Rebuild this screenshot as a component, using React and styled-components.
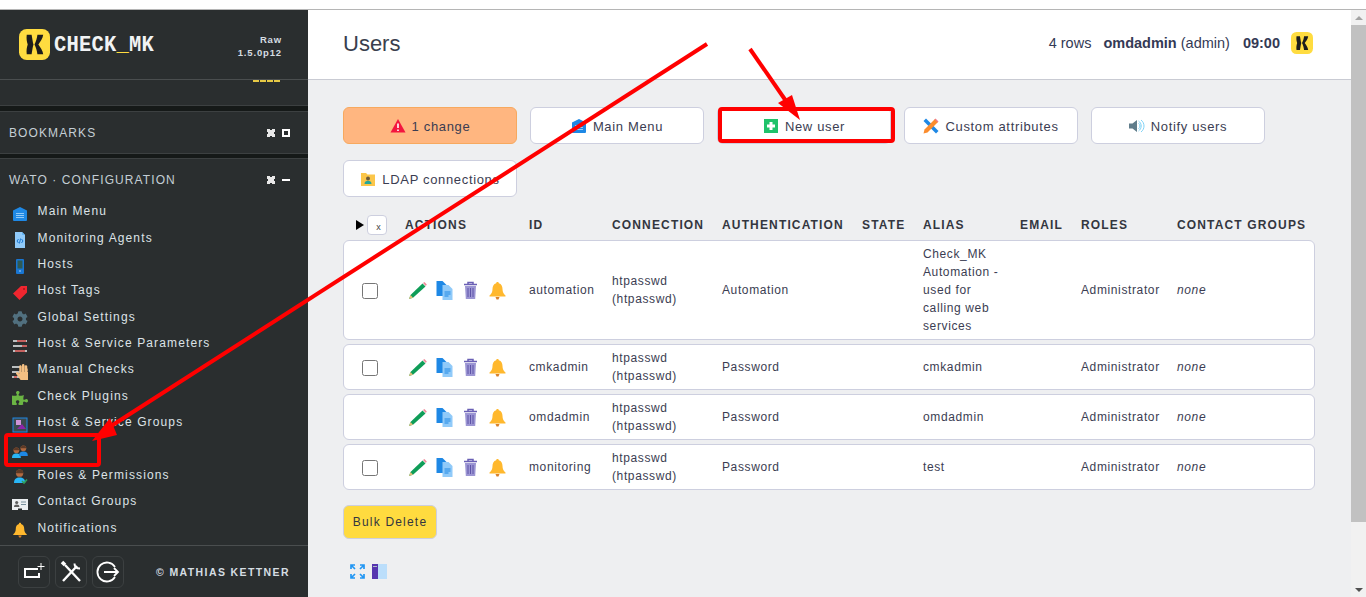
import React from "react";
import styled, { createGlobalStyle } from "styled-components";
import { FaCog, FaPuzzlePiece, FaHandPaper } from "react-icons/fa";

const GlobalStyle = createGlobalStyle`
  html, body {
    margin: 0;
    height: 597px;
    overflow: hidden;
    background: #fff;
    font-family: "Liberation Sans", Arial, sans-serif;
  }
`;

const Page = styled.div`
  position: relative;
  width: 1366px;
  height: 597px;
  padding-top: 9px;
  box-sizing: border-box;
  overflow: hidden;
`;

const Frame = styled.div`
  display: flex;
  height: 588px;
  border-top: 1px solid #b5b5b5;
`;

/* sidebar */
const Sidebar = styled.aside`
  width: 308px;
  flex: none;
  display: flex;
  flex-direction: column;
  background: #2a2e2f;
  color: #dfe5e9;
`;

const Brand = styled.div`
  height: 70px;
  flex: none;
  box-sizing: border-box;
  display: flex;
  align-items: center;
  padding: 0 26px 0 19px;
  border-bottom: 1px solid #4a4e4f;
`;

const LogoBox = styled.span`
  width: 31px;
  height: 31px;
  flex: none;
  svg {
    display: block;
    width: 100%;
    height: 100%;
  }
`;

const LogoText = styled.span`
  margin-left: 4px;
  font-family: "Liberation Mono", monospace;
  font-weight: 700;
  font-size: 20.5px;
  letter-spacing: 0.2px;
  color: #f1f3f4;
  transform: scaleY(1.1);
  span {
    color: #ffdc40;
  }
`;

const Version = styled.div`
  margin-left: auto;
  padding-top: 3px;
  text-align: right;
  font-size: 9.5px;
  font-weight: 700;
  line-height: 13px;
  letter-spacing: 0.85px;
  color: #d5dde2;
`;

const ClippedSnapin = styled.div`
  height: 26px;
  flex: none;
  box-sizing: border-box;
  border-bottom: 1px solid #3c4041;
  display: flex;
  justify-content: flex-end;
  padding-right: 28px;
  &::before {
    content: "";
    width: 27px;
    height: 2px;
    background: repeating-linear-gradient(90deg, #e6c945 0 6px, transparent 6px 7px);
  }
`;

const Gap = styled.div`
  height: ${(p) => p.$height}px;
  flex: none;
  background: #151918;
`;

const SnapinHead = styled.div`
  height: ${(p) => p.$height}px;
  flex: none;
  box-sizing: border-box;
  display: flex;
  align-items: center;
  justify-content: space-between;
  padding: ${(p) => (p.$bordered ? 0 : 2)}px 18px 0 9px;
  font-size: 12px;
  letter-spacing: 1.1px;
  color: #c4ced5;
  border-top: 1px solid #3c4041;
  border-bottom: ${(p) => (p.$bordered ? "1px solid #3c4041" : "none")};
`;

const HeadControls = styled.div`
  display: flex;
  align-items: center;
  gap: 7px;
`;

const CloseMark = styled.span`
  width: 8px;
  height: 8px;
  background:
    linear-gradient(45deg, transparent 34%, #e8e8e8 34% 66%, transparent 66%),
    linear-gradient(-45deg, transparent 34%, #e8e8e8 34% 66%, transparent 66%);
`;

const BoxMark = styled.span`
  width: 8px;
  height: 8px;
  box-sizing: border-box;
  border: 2px solid #fff;
`;

const DashMark = styled.span`
  width: 8px;
  height: 2px;
  background: #fff;
`;

const Menu = styled.nav`
  display: flex;
  flex-direction: column;
  padding-top: 0.45px;
`;

const MenuItem = styled.a`
  height: 26.39px;
  display: flex;
  align-items: center;
  padding: 0 0 3px 12px;
  box-sizing: border-box;
  font-size: 12px;
  letter-spacing: 1.13px;
  color: #dde3e7;
  svg {
    flex: none;
    width: 16px;
    height: 16px;
    margin: 5px 9.5px 0 0;
  }
`;

const SideFooter = styled.div`
  margin-top: auto;
  height: 53px;
  flex: none;
  box-sizing: border-box;
  border-top: 1px solid #4a4e4f;
  display: flex;
  align-items: center;
  padding: 0 18px;
`;

const FootButton = styled.div`
  width: 32px;
  height: 32px;
  margin-right: 5px;
  box-sizing: border-box;
  border: 1px solid #3c4041;
  border-radius: 6px;
  display: flex;
  align-items: center;
  justify-content: center;
  svg {
    width: 24px;
    height: 24px;
  }
`;

const Copyright = styled.div`
  margin-left: auto;
  font-size: 10.5px;
  font-weight: 700;
  letter-spacing: 1.4px;
  color: #d5dde2;
`;

/* main */
const Main = styled.main`
  flex: 1;
  min-width: 0;
  display: flex;
  flex-direction: column;
  background: #eeeff1;
`;

const TopBar = styled.header`
  height: 70px;
  flex: none;
  box-sizing: border-box;
  display: flex;
  align-items: center;
  padding: 0 38px 3px 35px;
  background: #fff;
  border-bottom: 1px solid #c9cbd3;
  color: #343a55;
`;

const Title = styled.h1`
  margin: 2px 0 0;
  font-size: 22px;
  font-weight: 400;
  color: #3a3f4e;
`;

const Status = styled.div`
  margin-left: auto;
  display: flex;
  align-items: center;
  font-size: 14.5px;
  svg {
    width: 22px;
    height: 22px;
    margin-left: 11px;
  }
`;

const User = styled.span`
  margin: 0 13px 0 12px;
  b {
    font-weight: 700;
  }
`;

const Content = styled.div`
  padding: 27px 36px 0 35px;
  display: flex;
  flex-direction: column;
`;

const Actions = styled.div`
  display: grid;
  grid-template-columns: repeat(5, 174px);
  column-gap: 13px;
  row-gap: 16px;
`;

const ActionButton = styled.button`
  height: 37px;
  padding: 1px 0 0;
  display: flex;
  align-items: center;
  justify-content: center;
  gap: 6px;
  box-sizing: border-box;
  border: 1px solid ${(p) => (p.$warn ? "#f7a95f" : "#cdcfdf")};
  border-radius: 6px;
  background: ${(p) => (p.$warn ? "#ffb680" : "#fff")};
  font-family: inherit;
  font-size: 13px;
  letter-spacing: 0.66px;
  color: #3b3d52;
  svg {
    width: 16px;
    height: 16px;
    flex: none;
  }
`;

const HeadRow = styled.div`
  display: grid;
  grid-template-columns: 62px 124px 83px 110px 140px 61px 97px 61px 96px 1fr;
  align-items: center;
  height: 28px;
  margin-top: 15px;
  padding-bottom: 2px;
  box-sizing: border-box;
  font-size: 12px;
  font-weight: 700;
  letter-spacing: 1.15px;
  color: #33363f;
`;

const Toggle = styled.div`
  display: flex;
  align-items: center;
  gap: 3px;
  padding-left: 13px;
  &::before {
    content: "";
    border-left: 8px solid #000;
    border-top: 5px solid transparent;
    border-bottom: 5px solid transparent;
  }
`;

const ToggleBox = styled.span`
  width: 20px;
  height: 20px;
  box-sizing: border-box;
  border: 1px solid #cdcfdf;
  border-radius: 4px;
  background: #fff;
  display: flex;
  align-items: flex-end;
  justify-content: center;
  padding-left: 4px;
  font-size: 9px;
  font-weight: 400;
  line-height: 14px;
  color: #444;
`;

const Rows = styled.div`
  display: flex;
  flex-direction: column;
  gap: 4px;
`;

const Row = styled.div`
  display: grid;
  grid-template-columns: 61px 124px 83px 110px 140px 61px 97px 61px 96px 1fr;
  align-items: center;
  padding: 4px 0;
  box-sizing: border-box;
  background: #fff;
  border: 1px solid #cdcfdf;
  border-radius: 6px;
  font-size: 12px;
  line-height: 18px;
  letter-spacing: 0.62px;
  color: #3b3d52;
`;

const AliasCell = styled.div`
  padding-right: 16px;
`;

const Check = styled.input.attrs({ type: "checkbox" })`
  appearance: none;
  display: block;
  width: 16px;
  height: 16px;
  margin: 2px 0 0 18px;
  border: 1.5px solid #767676;
  border-radius: 2.5px;
  background: #fff;
`;

const RowIcons = styled.div`
  display: flex;
  align-items: center;
  gap: 7.5px;
  padding-left: 3px;
  svg {
    width: 19px;
    height: 19px;
    flex: none;
  }
`;

const Italic = styled.span`
  font-style: italic;
`;

const BulkDelete = styled.button`
  align-self: flex-start;
  width: 94px;
  height: 34px;
  margin-top: 15px;
  padding: 0;
  box-sizing: border-box;
  border: 1px solid #cdcfdf;
  border-radius: 6px;
  background: #ffdb3f;
  font-family: inherit;
  font-size: 12px;
  letter-spacing: 1.2px;
  color: #33363f;
`;

const ViewIcons = styled.div`
  display: flex;
  gap: 7px;
  margin-top: 25px;
  padding-left: 7px;
  svg {
    width: 15px;
    height: 15px;
  }
`;

/* browser scrollbar */
const Scrollbar = styled.div`
  width: 15px;
  flex: none;
  display: flex;
  flex-direction: column;
  align-items: center;
  background: #f1f1f1;
`;

const ScrollTrack = styled.div`
  flex: 1;
  width: 100%;
  padding: 15px 0 76px;
  box-sizing: border-box;
  display: flex;
`;

const ScrollThumb = styled.div`
  flex: 1;
  background: #c1c1c1;
`;

const ScrollArrow = styled.span`
  position: absolute;
  right: 3px;
  ${(p) => (p.$down ? "bottom: 5px;" : "top: 16px;")}
  border-left: 4px solid transparent;
  border-right: 4px solid transparent;
  ${(p) => (p.$down ? "border-top: 4px solid #505050;" : "border-bottom: 4px solid #a3a3a3;")}
`;

/* red annotations painted on top of the screenshot */
const Annotations = styled.svg`
  position: absolute;
  inset: 0;
  pointer-events: none;
`;

const KMark = () => (
  <svg viewBox="0 0 32 32">
    <rect width="32" height="32" rx="8" fill="#ffdc40" />
    <path d="M8 6h5c1 5 1 7 2 10-1 3-1 5-2 10H8c-.5-4 0-7 1-10-1-3-1.5-6-1-10z" fill="#1c1c1c" />
    <path d="M25 6h-6c-.5 4-1.5 7-3 10 1.5 3 2.5 6 3 10h6c-.5-4-3-7-5-10 2-3 4.5-6 5-10z" fill="#1c1c1c" />
  </svg>
);

const Svg = ({ children }) => <svg viewBox="0 0 16 16">{children}</svg>;

const HomeIcon = () => (
  <Svg>
    <path d="M8 1l7 3.5V14a1 1 0 0 1-1 1H2a1 1 0 0 1-1-1V4.500z" fill="#1e88e5" />
    <path d="M4 7.500h8M4 9.500h8M4 11.500h8" stroke="#90caf9" strokeWidth="1" />
  </Svg>
);
const AgentIcon = () => (
  <Svg>
    <path d="M3 0h7l3 3v13H3z" fill="#90caf9" />
    <path d="M10 0l3 3h-3z" fill="#64b5f6" />
    <path d="M6.500 7L5 9l1.500 2M9.500 7L11 9l-1.500 2M8.600 6.500l-1.200 5" stroke="#1976d2" fill="none" />
  </Svg>
);
const HostIcon = () => (
  <Svg>
    <rect x="4" y="1" width="8" height="15" rx="1" fill="#1976d2" />
    <rect x="5.500" y="2.500" width="5" height="8" fill="#2e5a55" />
    <circle cx="8" cy="13" r=".8" fill="#bbdefb" />
  </Svg>
);
const TagIcon = () => (
  <Svg>
    <path d="M9 1h6v6.500L7.500 15 1 8.500z" fill="#f0262f" />
    <circle cx="12" cy="4" r="1" fill="#a8141b" />
  </Svg>
);
const SlidersIcon = () => (
  <Svg>
    <path d="M1 3h14M1 8h14M1 13h14" stroke="#eceff1" strokeWidth="1.400" />
    <path d="M5 3h9M10 8h5M3 13h10" stroke="#c7433f" strokeWidth="1.400" />
  </Svg>
);
const HandIcon = () => (
  <svg viewBox="0 0 16 16">
    <path d="M0 3h8M0 8h8M0 13h8" stroke="#eceff1" strokeWidth="1.400" />
    <path d="M2 13h3" stroke="#d8413c" strokeWidth="1.400" />
    <FaHandPaper x="3" y="0" width="13" height="16" color="#f5c083" />
  </svg>
);
const GroupIcon = () => (
  <Svg>
    <rect x="1" y="1" width="14" height="14" fill="#3d4a4f" stroke="#1e88e5" strokeWidth="1" />
    <rect x="4" y="3" width="5" height="5" fill="#ce93d8" />
    <path d="M5 12l5-5 4 5z" fill="#8e24aa" />
  </Svg>
);
const Person = ({ x, y, s, body }) => (
  <g transform={`translate(${x} ${y}) scale(${s})`}>
    <path d="M0 10c0-3 1.600-4 4-4s4 1 4 4z" fill={body} />
    <circle cx="4" cy="3" r="2.600" fill="#b06a42" />
    <path d="M1.400 3a2.600 2.600 0 0 1 5.200 0z" fill="#5d3a26" />
  </g>
);
const UsersIcon = () => (
  <Svg>
    <Person x={0} y={4} s={1.1} body="#29b6f6" />
    <Person x={7} y={2} s={1.1} body="#1e88e5" />
  </Svg>
);
const RolesIcon = () => (
  <Svg>
    <Person x={2} y={0} s={1.400} body="#29b6f6" />
    <path d="M10 12l2 2 3-3.500" stroke="#2e9e5b" strokeWidth="1.600" fill="none" />
  </Svg>
);
const ContactIcon = () => (
  <Svg>
    <path d="M0 3h16v11h-6v-1.500H6V14H0z" fill="#eceff1" />
    <circle cx="4.700" cy="6.500" r="1.600" fill="#5d5d5d" />
    <path d="M2 11c0-2 1-2.600 2.700-2.600S7.400 9 7.400 11z" fill="#5d5d5d" />
    <path d="M9 6h5M9 8.500h5" stroke="#78909c" />
  </Svg>
);
const PlusTile = () => (
  <Svg>
    <rect x="1" y="1" width="14" height="14" fill="#1fc26a" />
    <path d="M8 4v8M4 8h8" stroke="#fff" strokeWidth="3" />
  </Svg>
);
const WarnIcon = () => (
  <Svg>
    <path d="M8 1l7.500 13.500H.5z" fill="#f3163f" />
    <path d="M8 5.500v4.500M8 11.400v1.500" stroke="#fff" strokeWidth="1.600" />
  </Svg>
);
const RulerIcon = () => (
  <Svg>
    <path d="M3 .5L15.500 13 13 15.500.5 3z" fill="#1e88e5" />
    <path d="M.5 15.500l1-4L12 1l3 3L4.500 14.500z" fill="#fb8c2d" />
    <path d="M12.500.5l3 3-1 1-3-3z" fill="#ef7a85" />
  </Svg>
);
const SpeakerIcon = () => (
  <Svg>
    <path d="M0 5.500h3.500L8 2v12l-4.500-3.500H0z" fill="#607d8b" />
    <path d="M9.500 3a6 6 0 0 1 0 10M9.500 5.200a3.400 3.400 0 0 1 0 5.600M12 2a7.500 7.500 0 0 1 0 12" stroke="#7fd3f7" fill="none" />
  </Svg>
);
const FolderIcon = () => (
  <Svg>
    <path d="M1 2h5l1.500 1.500H15V15H1z" fill="#fbc64a" />
    <circle cx="8" cy="7.500" r="2" fill="#6b5a3a" />
    <path d="M4.500 13c0-2.400 1.500-3.200 3.500-3.200s3.500.8 3.500 3.200z" fill="#26a69a" />
  </Svg>
);
const PencilIcon = () => (
  <svg viewBox="0 0 19 19">
    <path d="M1 18l1.500-4L14.500 2.500l3 3L5 16.800z" fill="#0f9d58" />
    <path d="M1 18l1.500-4L5 16.800z" fill="#e5c07b" />
    <path d="M15 2l1.400-1 2.400 2.400-1 1.600z" fill="#ef8a9a" />
  </svg>
);
const CopyIcon = () => (
  <svg viewBox="0 0 18 19">
    <path d="M1 0h6l4 4v11H1z" fill="#1e88e5" />
    <path d="M7 4h6l4 4v11H7z" fill="#90caf9" />
    <path d="M9 11h6M9 13h6M9 15h4" stroke="#1e88e5" />
  </svg>
);
const TrashIcon = () => (
  <svg viewBox="0 0 18 19">
    <path d="M2.500 3.500h13M6.500 3V1.500h5V3" stroke="#6a5fb5" strokeWidth="1.500" fill="none" />
    <path d="M3.500 5h11l-.8 13H4.300z" fill="#9b95d3" />
    <path d="M6.500 7v9M9 7v9M11.500 7v9" stroke="#5e54a8" />
  </svg>
);
const BellIcon = () => (
  <svg viewBox="0 0 18 19">
    <path d="M9 1c1 0 1.300.7 1.300 1.300C13 3 14 5.600 14 8c0 3 1 5 3 6.500v1H1v-1C3 13 4 11 4 8c0-2.400 1-5 3.700-5.700C7.700 1.700 8 1 9 1z" fill="#ffb82e" />
    <path d="M7 16h4l-1 2.500H8z" fill="#d9822b" />
  </svg>
);
const ExpandIcon = () => (
  <svg viewBox="0 0 15 15" fill="none" stroke="#2196f3" strokeWidth="1.700">
    <path d="M1 5V1h4M10 1h4v4M14 10v4h-4M5 14H1v-4M1.500 1.500l3.500 3.500M13.500 1.500L10 5M13.500 13.500L10 10M1.500 13.500L5 10" />
  </svg>
);
const PanelIcon = () => (
  <svg viewBox="0 0 15 15">
    <rect width="15" height="15" fill="#bbdefb" />
    <rect width="6" height="15" fill="#5535b0" />
    <path d="M1 2.500h4" stroke="#b0bec5" />
  </svg>
);

const SnapinAddIcon = () => (
  <svg viewBox="0 0 24 24" fill="none" stroke="#fff" strokeWidth="2">
    <path d="M16 9H3v8h13M17 13v5" />
    <path d="M19 3v7M15.500 6.500h7" strokeWidth="1" />
  </svg>
);
const ToolsIcon = () => (
  <svg viewBox="0 0 24 24" fill="none" stroke="#fff">
    <path d="M4 21L18 6" strokeWidth="2.400" />
    <path d="M21 21L6 5" strokeWidth="2.400" />
    <path d="M15.500 3.500c0 3 2 5 5.500 5" strokeWidth="2" />
    <path d="M3 2l3 3" strokeWidth="3.500" />
  </svg>
);
const LogoutIcon = () => (
  <svg viewBox="0 0 24 24" fill="none" stroke="#fff" strokeWidth="1.800">
    <path d="M19 7A9.500 9.500 0 1 0 19 17" />
    <path d="M8 12h14M18 8l4 4-4 4" />
  </svg>
);

const menuItems = [
  ["Main Menu", <HomeIcon />],
  ["Monitoring Agents", <AgentIcon />],
  ["Hosts", <HostIcon />],
  ["Host Tags", <TagIcon />],
  ["Global Settings", <FaCog color="#51707f" />],
  ["Host & Service Parameters", <SlidersIcon />],
  ["Manual Checks", <HandIcon />],
  ["Check Plugins", <FaPuzzlePiece color="#6bb544" />],
  ["Host & Service Groups", <GroupIcon />],
  ["Users", <UsersIcon />],
  ["Roles & Permissions", <RolesIcon />],
  ["Contact Groups", <ContactIcon />],
  ["Notifications", <BellIcon />],
];

const buttons = [
  ["1 change", <WarnIcon />, true],
  ["Main Menu", <HomeIcon />],
  ["New user", <PlusTile />],
  ["Custom attributes", <RulerIcon />],
  ["Notify users", <SpeakerIcon />],
  ["LDAP connections", <FolderIcon />],
];

const headers = ["ACTIONS", "ID", "CONNECTION", "AUTHENTICATION", "STATE", "ALIAS", "EMAIL", "ROLES", "CONTACT GROUPS"];

const users = [
  { id: "automation", auth: "Automation", alias: "Check_MK Automation - used for calling web services", check: true },
  { id: "cmkadmin", auth: "Password", alias: "cmkadmin", check: true },
  { id: "omdadmin", auth: "Password", alias: "omdadmin", check: false },
  { id: "monitoring", auth: "Password", alias: "test", check: true },
];

export default function App() {
  return (
    <Page>
      <GlobalStyle />
      <Frame>
        <Sidebar>
          <Brand>
            <LogoBox>
              <KMark />
            </LogoBox>
            <LogoText>
              CHECK<span>_</span>MK
            </LogoText>
            <Version>
              Raw
              <br />
              1.5.0p12
            </Version>
          </Brand>
          <ClippedSnapin />
          <Gap $height={5} />
          <SnapinHead $height={43} $bordered>
            BOOKMARKS
            <HeadControls>
              <CloseMark />
              <BoxMark />
            </HeadControls>
          </SnapinHead>
          <Gap $height={4} />
          <SnapinHead $height={41}>
            WATO · CONFIGURATION
            <HeadControls>
              <CloseMark />
              <DashMark />
            </HeadControls>
          </SnapinHead>
          <Menu>
            {menuItems.map(([label, icon]) => (
              <MenuItem key={label}>
                {icon}
                {label}
              </MenuItem>
            ))}
          </Menu>
          <SideFooter>
            <FootButton>
              <SnapinAddIcon />
            </FootButton>
            <FootButton>
              <ToolsIcon />
            </FootButton>
            <FootButton>
              <LogoutIcon />
            </FootButton>
            <Copyright>© MATHIAS KETTNER</Copyright>
          </SideFooter>
        </Sidebar>
        <Main>
          <TopBar>
            <Title>Users</Title>
            <Status>
              4 rows
              <User>
                <b>omdadmin</b> (admin)
              </User>
              <b>09:00</b>
              <KMark />
            </Status>
          </TopBar>
          <Content>
            <Actions>
              {buttons.map(([label, icon, warn]) => (
                <ActionButton key={label} $warn={warn}>
                  {icon}
                  {label}
                </ActionButton>
              ))}
            </Actions>
            <HeadRow>
              <Toggle>
                <ToggleBox>x</ToggleBox>
              </Toggle>
              {headers.map((h) => (
                <div key={h}>{h}</div>
              ))}
            </HeadRow>
            <Rows>
              {users.map((u) => (
                <Row key={u.id}>
                  <div>{u.check && <Check />}</div>
                  <RowIcons>
                    <PencilIcon />
                    <CopyIcon />
                    <TrashIcon />
                    <BellIcon />
                  </RowIcons>
                  <div>{u.id}</div>
                  <div>
                    htpasswd
                    <br />
                    (htpasswd)
                  </div>
                  <div>{u.auth}</div>
                  <div />
                  <AliasCell>{u.alias}</AliasCell>
                  <div />
                  <div>Administrator</div>
                  <Italic>none</Italic>
                </Row>
              ))}
            </Rows>
            <BulkDelete>Bulk Delete</BulkDelete>
            <ViewIcons>
              <ExpandIcon />
              <PanelIcon />
            </ViewIcons>
          </Content>
        </Main>
        <Scrollbar>
          <ScrollArrow />
          <ScrollTrack>
            <ScrollThumb />
          </ScrollTrack>
          <ScrollArrow $down />
        </Scrollbar>
      </Frame>
      <Annotations width="1366" height="597" viewBox="0 0 1366 597">
        <g fill="none" stroke="#f00" strokeWidth="4">
          <rect x="6" y="435" width="93" height="30" rx="2" />
          <rect x="720" y="109" width="173" height="32" rx="2" />
          <path d="M707 44L108 428" />
          <path d="M750 49L786 101" />
        </g>
        <path d="M92 441L110 418 117 435z" fill="#f00" />
        <path d="M800 120L778 103 792 95z" fill="#f00" />
      </Annotations>
    </Page>
  );
}
